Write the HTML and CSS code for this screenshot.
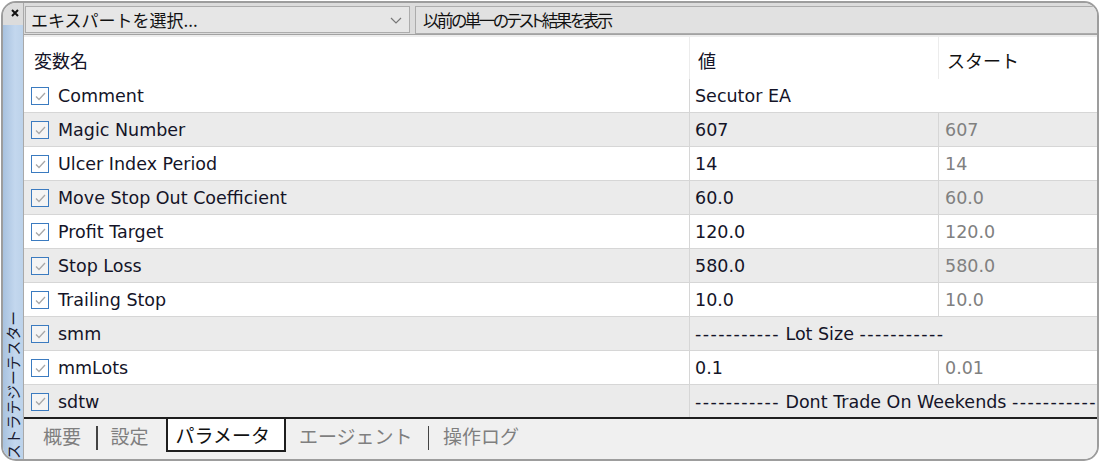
FILE: index.html
```html
<!DOCTYPE html>
<html lang="ja">
<head>
<meta charset="utf-8">
<title>Strategy Tester</title>
<link rel="stylesheet" href="styles.css">
</head>
<body>
<div class="frame">
  <aside class="side">
    <div class="close">
      <svg width="8" height="8" viewBox="0 0 8 8"><path d="M1 1L7 7M7 1L1 7" stroke="#111" stroke-width="2" fill="none"/></svg>
    </div>
    <div class="strip"><span class="vlabel">ストラテジーテスター</span></div>
  </aside>
  <main class="main">
    <div class="toolbar">
      <div class="select">
        <span>エキスパートを選択...</span>
        <svg class="chev" width="12" height="7" viewBox="0 0 12 7"><path d="M1 1L6 6L11 1" stroke="#777" stroke-width="1.2" fill="none"/></svg>
      </div>
      <div class="btn">以前の単一のテスト結果を表示</div>
    </div>
    <div class="grid">
      <div class="row head">
        <div class="c name jp">変数名</div>
        <div class="c val jp">値</div>
        <div class="c start jp">スタート</div>
      </div>
      <div class="row">
        <div class="c name"><span class="cb"><svg width="11" height="9" viewBox="0 0 11 9"><path d="M1 4.5L4 7.5L10 1" stroke="#a9a9a9" stroke-width="1.3" fill="none"/></svg></span>Comment</div>
        <div class="c val span">Secutor EA</div>
      </div>
      <div class="row alt">
        <div class="c name"><span class="cb"><svg width="11" height="9" viewBox="0 0 11 9"><path d="M1 4.5L4 7.5L10 1" stroke="#a9a9a9" stroke-width="1.3" fill="none"/></svg></span>Magic Number</div>
        <div class="c val">607</div>
        <div class="c start">607</div>
      </div>
      <div class="row">
        <div class="c name"><span class="cb"><svg width="11" height="9" viewBox="0 0 11 9"><path d="M1 4.5L4 7.5L10 1" stroke="#a9a9a9" stroke-width="1.3" fill="none"/></svg></span>Ulcer Index Period</div>
        <div class="c val">14</div>
        <div class="c start">14</div>
      </div>
      <div class="row alt">
        <div class="c name"><span class="cb"><svg width="11" height="9" viewBox="0 0 11 9"><path d="M1 4.5L4 7.5L10 1" stroke="#a9a9a9" stroke-width="1.3" fill="none"/></svg></span>Move Stop Out Coefficient</div>
        <div class="c val">60.0</div>
        <div class="c start">60.0</div>
      </div>
      <div class="row">
        <div class="c name"><span class="cb"><svg width="11" height="9" viewBox="0 0 11 9"><path d="M1 4.5L4 7.5L10 1" stroke="#a9a9a9" stroke-width="1.3" fill="none"/></svg></span>Profit Target</div>
        <div class="c val">120.0</div>
        <div class="c start">120.0</div>
      </div>
      <div class="row alt">
        <div class="c name"><span class="cb"><svg width="11" height="9" viewBox="0 0 11 9"><path d="M1 4.5L4 7.5L10 1" stroke="#a9a9a9" stroke-width="1.3" fill="none"/></svg></span>Stop Loss</div>
        <div class="c val">580.0</div>
        <div class="c start">580.0</div>
      </div>
      <div class="row">
        <div class="c name"><span class="cb"><svg width="11" height="9" viewBox="0 0 11 9"><path d="M1 4.5L4 7.5L10 1" stroke="#a9a9a9" stroke-width="1.3" fill="none"/></svg></span>Trailing Stop</div>
        <div class="c val">10.0</div>
        <div class="c start">10.0</div>
      </div>
      <div class="row alt">
        <div class="c name"><span class="cb"><svg width="11" height="9" viewBox="0 0 11 9"><path d="M1 4.5L4 7.5L10 1" stroke="#a9a9a9" stroke-width="1.3" fill="none"/></svg></span>smm</div>
        <div class="c val span"><span class="dash">-----------</span>&nbsp;Lot Size&nbsp;<span class="dash">-----------</span></div>
      </div>
      <div class="row">
        <div class="c name"><span class="cb"><svg width="11" height="9" viewBox="0 0 11 9"><path d="M1 4.5L4 7.5L10 1" stroke="#a9a9a9" stroke-width="1.3" fill="none"/></svg></span>mmLots</div>
        <div class="c val">0.1</div>
        <div class="c start">0.01</div>
      </div>
      <div class="row alt last">
        <div class="c name"><span class="cb"><svg width="11" height="9" viewBox="0 0 11 9"><path d="M1 4.5L4 7.5L10 1" stroke="#a9a9a9" stroke-width="1.3" fill="none"/></svg></span>sdtw</div>
        <div class="c val span"><span class="dash">-----------</span>&nbsp;Dont Trade On Weekends&nbsp;<span class="dash">-----------</span></div>
      </div>
    </div>
    <div class="tabs">
      <span class="tab t1">概要</span>
      <span class="sep"></span>
      <span class="tab t2">設定</span>
      <span class="tab active">パラメータ</span>
      <span class="tab t4">エージェント</span>
      <span class="sep s2"></span>
      <span class="tab t5">操作ログ</span>
    </div>
  </main>
</div>
</body>
</html>
```
FILE: styles.css
```css
* { box-sizing: border-box; }
html, body { margin: 0; padding: 0; background: #fff; }
body {
  font-family: "DejaVu Sans", "Noto Sans CJK JP", sans-serif;
  font-size: 17.5px;
  color: #141428;
}
.frame {
  margin: 1px 1px 0 1px;
  width: 1098px;
  height: 460px;
  border: 2px solid #9d9d9d;
  border-radius: 15px;
  overflow: hidden;
  display: flex;
  background: #f0f0f0;
}
.side {
  width: 20px;
  flex: none;
  display: flex;
  flex-direction: column;
  background: #dcdcdc;
}
.close {
  height: 22px;
  display: flex;
  justify-content: center;
  padding-top: 6px;
  padding-left: 3px;
}
.strip {
  flex: 1;
  background: linear-gradient(to right, #a8c2df, #c3d7ee 60%, #bcd2ea);
  display: flex;
  flex-direction: column;
  justify-content: flex-end;
  align-items: center;
}
.vlabel {
  font-family: "Noto Sans CJK JP", sans-serif;
  font-size: 14.8px;
  line-height: 18px;
  color: #1a1a30;
  writing-mode: vertical-rl;
  text-orientation: sideways;
  transform: rotate(180deg);
  white-space: nowrap;
}
.main {
  flex: 1;
  min-width: 0;
  display: flex;
  flex-direction: column;
  border-left: 1px solid #a9a9a9;
}
.toolbar {
  height: 32px;
  flex: none;
  background: #dcdcdc;
  display: flex;
  gap: 5px;
  padding: 3px 0 0 1px;
  border-bottom: 1px solid #a2a2a2;
}
.select {
  width: 385px;
  height: 27px;
  border: 1px solid #acacac;
  background: #e6e6e6;
  display: flex;
  align-items: center;
  justify-content: space-between;
  padding: 0 7px 0 5px;
  font-family: "Noto Sans CJK JP", sans-serif;
  font-size: 17px;
  color: #111;
}
.chev { margin-top: 2px; }
.btn {
  flex: 1;
  height: 28px;
  border: 1px solid #acacac;
  border-right: none;
  background: #e1e1e1;
  display: flex;
  align-items: center;
  padding-left: 7px;
  font-family: "Noto Sans CJK JP", sans-serif;
  font-size: 16.5px;
  letter-spacing: -2.4px;
  font-feature-settings: "palt";
  color: #111;
}
.grid {
  background: #fff;
  border-top: 2px solid #ededed;
  flex: none;
}
.row {
  display: grid;
  grid-template-columns: 665px 249px 1fr;
  height: 34px;
  border-bottom: 1px solid #d6d6d6;
  background: #fff;
}
.row.alt { background: #ebebeb; }
.row.head { height: 42px; border-bottom: none; }
.row.last { border-bottom: 2px solid #1e1e1e; }
.c {
  display: flex;
  align-items: center;
  white-space: nowrap;
  overflow: hidden;
  padding-top: 1px;
}
.name { padding-left: 7px; }
.val { padding-left: 5px; border-left: 1px solid #d6d6d6; }
.start { padding-left: 6px; border-left: 1px solid #d6d6d6; color: #808080; }
.head .val, .head .start { border-left-color: #ececec; }
.head .name { padding-left: 10px; }
.head .val { padding-left: 8px; }
.head .start { padding-left: 8px; color: #111; }
.jp {
  font-family: "Noto Sans CJK JP", sans-serif;
  font-size: 18px;
  padding-top: 4px;
}
.span { grid-column: 2 / 4; }
.dash { letter-spacing: 1.4px; }
.cb {
  width: 18px;
  height: 18px;
  border: 1.5px solid #3b7bc0;
  background: #fff;
  display: inline-flex;
  align-items: center;
  justify-content: center;
  margin-right: 9px;
  flex: none;
}
.row.alt .cb { background: #f4f4f4; }
.tabs {
  flex: 1;
  display: flex;
  align-items: flex-start;
  background: #f0f0f0;
  font-family: "Noto Sans CJK JP", sans-serif;
  font-size: 19px;
  color: #7f7f7f;
  padding-left: 19px;
}
.tab {
  height: 33px;
  display: flex;
  align-items: center;
  white-space: nowrap;
}
.sep {
  width: 1.5px;
  height: 24px;
  background: #444;
  margin: 7px 13px 0 15px;
}
.active {
  background: #fff;
  color: #111;
  border: 2px solid #1e1e1e;
  border-top: none;
  padding: 0 14px 0 8px;
  margin: 0 13px 0 17px;
}
.s2 { margin-left: 15px; margin-right: 14px; }
```
